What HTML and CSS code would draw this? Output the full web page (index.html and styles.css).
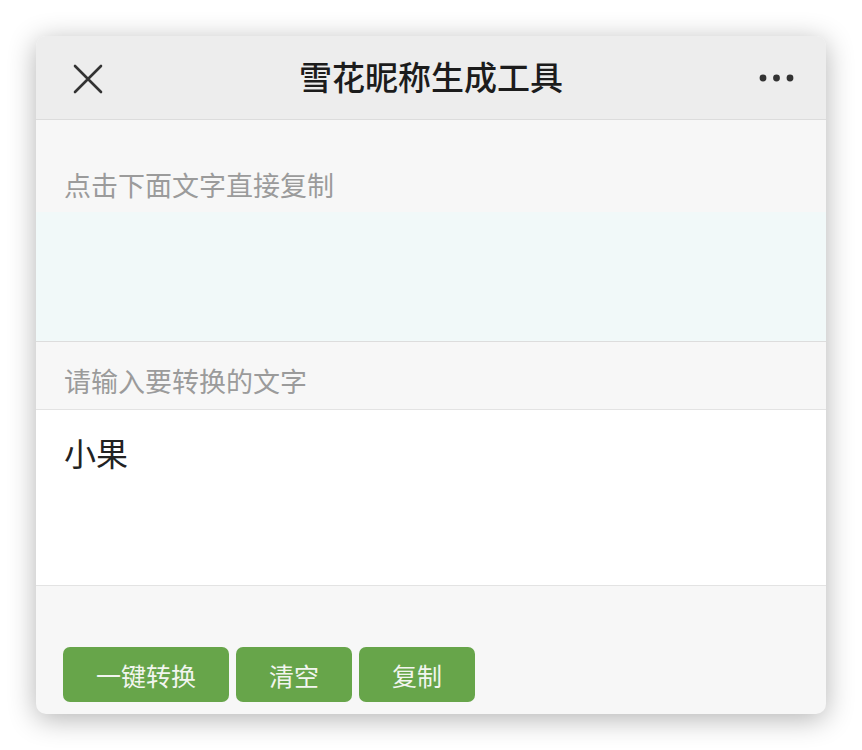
FILE: index.html
```html
<!DOCTYPE html>
<html lang="zh">
<head>
<meta charset="utf-8">
<title>雪花昵称生成工具</title>
<link rel="stylesheet" href="styles.css">
</head>
<body>
<div class="card">
  <header class="topbar">
    <div class="close">
      <svg width="30" height="30" viewBox="0 0 30 30"><path d="M2 2 L28 28 M28 2 L2 28" stroke="#333" stroke-width="2.6" stroke-linecap="round" fill="none"/></svg>
    </div>
    <h1 class="title">雪花昵称生成工具</h1>
    <div class="more">
      <svg width="36" height="10" viewBox="0 0 36 10"><circle cx="4" cy="5" r="3.4" fill="#333"/><circle cx="17.5" cy="5" r="3.4" fill="#333"/><circle cx="31" cy="5" r="3.4" fill="#333"/></svg>
    </div>
  </header>
  <div class="label label-first">点击下面文字直接复制</div>
  <div class="result"></div>
  <div class="label label-second">请输入要转换的文字</div>
  <div class="input">小果</div>
  <div class="actions">
    <button class="btn btn-wide">一键转换</button>
    <button class="btn">清空</button>
    <button class="btn">复制</button>
  </div>
</div>
</body>
</html>
```

FILE: styles.css
```css
html, body {
  margin: 0;
  padding: 0;
  background: #ffffff;
}
body {
  padding: 36px;
  font-family: "Noto Sans CJK SC", "Noto Sans", sans-serif;
}
.card {
  width: 790px;
  height: 678px;
  border-radius: 10px;
  overflow: hidden;
  background: #f7f7f7;
  box-shadow: 0 5px 28px rgba(0, 0, 0, 0.3);
  display: flex;
  flex-direction: column;
}
.topbar {
  height: 83px;
  background: #ededed;
  border-bottom: 1px solid #dcdcdc;
  display: grid;
  grid-template-columns: 120px 1fr 120px;
  align-items: center;
}
.close {
  padding-left: 37px;
  display: flex;
  align-items: center;
  padding-top: 2px;
}
.title {
  margin: 0;
  text-align: center;
  font-size: 33px;
  font-weight: 500;
  color: #1c1c1c;
  line-height: 40px;
  padding-bottom: 4px;
}
.more {
  display: flex;
  justify-content: flex-end;
  padding-right: 31px;
  padding-top: 1px;
}
.label {
  color: #9b9b9b;
  font-size: 27px;
  line-height: 36px;
  padding-left: 28px;
}
.label-first {
  padding-top: 47px;
  padding-bottom: 9px;
}
.result {
  height: 129px;
  background: #f1f9f9;
  border-bottom: 1px solid #dddddd;
}
.label-second {
  padding-top: 21px;
  padding-bottom: 10px;
  border-bottom: 1px solid #e3e3e3;
}
.input {
  height: 153px;
  background: #ffffff;
  border-bottom: 1px solid #e3e3e3;
  padding: 22px 28px 0;
  font-size: 32px;
  line-height: 40px;
  color: #222222;
}
.actions {
  display: flex;
  gap: 7px;
  padding: 61px 27px 12px;
}
.btn {
  height: 55px;
  width: 116px;
  border: none;
  border-radius: 7px;
  background: #67a54a;
  color: #f2f5ef;
  font-family: "Noto Sans CJK SC", "Noto Sans", sans-serif;
  font-size: 25px;
  padding: 0;
}
.btn-wide {
  width: 166px;
}
```
